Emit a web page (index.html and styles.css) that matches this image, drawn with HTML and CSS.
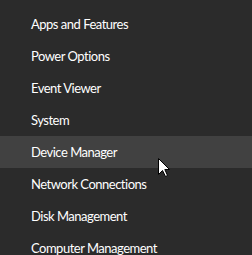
FILE: index.html
```html
<!DOCTYPE html>
<html>
<head>
<meta charset="utf-8">
<link rel="stylesheet" href="styles.css">
</head>
<body>
<ul class="menu">
  <li class="item">Apps and Features</li>
  <li class="item">Power Options</li>
  <li class="item">Event Viewer</li>
  <li class="item">System</li>
  <li class="item item-hover">Device Manager
    <svg class="cursor" width="13" height="20" viewBox="0 0 13 20"><path d="M0.5 0.5 L0.5 16.5 L4.5 12.5 L7.5 18.5 L9.5 17.5 L6.8 11.5 L11.5 11.5 Z" fill="#fff" stroke="#000" stroke-width="1"/></svg>
  </li>
  <li class="item">Network Connections</li>
  <li class="item">Disk Management</li>
  <li class="item">Computer Management</li>
</ul>
</body>
</html>
```
FILE: styles.css
```css
html, body {
  margin: 0;
  padding: 0;
  background: #2b2b2b;
  width: 252px;
  height: 255px;
  overflow: hidden;
}
.menu {
  list-style: none;
  margin: 0;
  padding: 8px 0 0 0;
  font-family: Lato, sans-serif;
  font-size: 13px;
  letter-spacing: -0.5px;
  color: #ffffff;
}
.item {
  position: relative;
  height: 32px;
  line-height: 32px;
  padding-left: 31px;
  white-space: nowrap;
}
.item-hover {
  background: #414141;
}
.cursor {
  position: absolute;
  left: 158px;
  top: 22px;
}
```
